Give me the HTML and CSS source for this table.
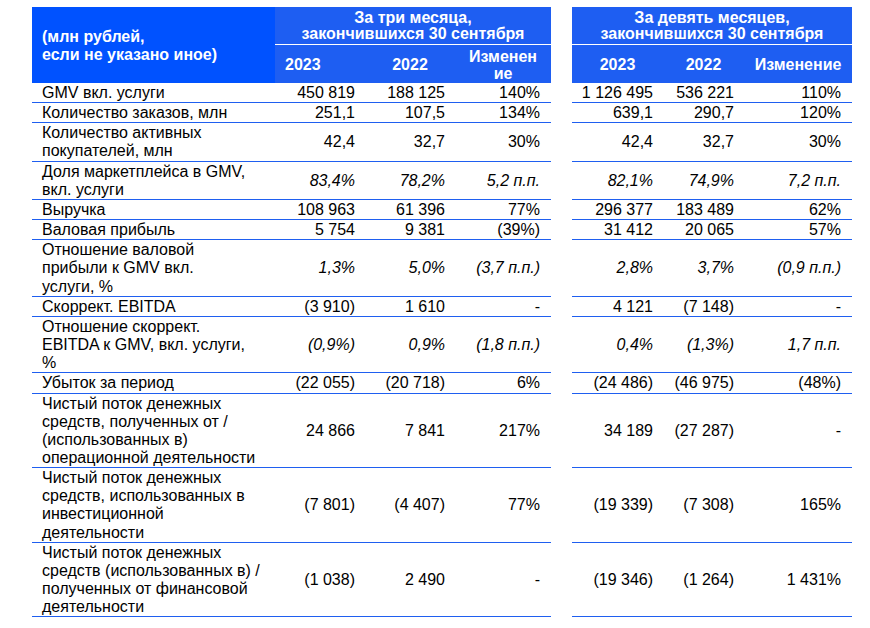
FILE: index.html
```html
<!DOCTYPE html>
<html lang="ru">
<head>
<meta charset="utf-8">
<title>Финансовые показатели</title>
<link rel="stylesheet" href="styles.css">
</head>
<body>
<div class="wrap">
<table class="fin">
  <colgroup>
    <col class="c-label">
    <col class="c-a1"><col class="c-a2"><col class="c-a3">
    <col class="c-gap">
    <col class="c-b1"><col class="c-b2"><col class="c-b3">
  </colgroup>
  <thead>
    <tr class="hr1">
      <th class="corner" rowspan="2">(млн рублей,<br>если не указано иное)</th>
      <th class="group" colspan="3">За три месяца,<br>закончившихся 30 сентября</th>
      <th class="gap" rowspan="2"></th>
      <th class="group" colspan="3">За девять месяцев,<br>закончившихся 30 сентября</th>
    </tr>
    <tr class="hr2">
      <th class="yr first">2023</th>
      <th class="yr">2022</th>
      <th class="yr">Изменен<br>ие</th>
      <th class="yr">2023</th>
      <th class="yr">2022</th>
      <th class="yr">Изменение</th>
    </tr>
  </thead>
  <tbody>
    <tr>
      <td class="lbl">GMV вкл. услуги</td>
      <td class="n">450 819</td><td class="n">188 125</td><td class="n n3">140%</td>
      <td class="gap"></td>
      <td class="n">1 126 495</td><td class="n">536 221</td><td class="n n3">110%</td>
    </tr>
    <tr>
      <td class="lbl">Количество заказов, млн</td>
      <td class="n">251,1</td><td class="n">107,5</td><td class="n n3">134%</td>
      <td class="gap"></td>
      <td class="n">639,1</td><td class="n">290,7</td><td class="n n3">120%</td>
    </tr>
    <tr>
      <td class="lbl">Количество активных<br>покупателей, млн</td>
      <td class="n">42,4</td><td class="n">32,7</td><td class="n n3">30%</td>
      <td class="gap"></td>
      <td class="n">42,4</td><td class="n">32,7</td><td class="n n3">30%</td>
    </tr>
    <tr class="it">
      <td class="lbl">Доля маркетплейса в GMV,<br>вкл. услуги</td>
      <td class="n">83,4%</td><td class="n">78,2%</td><td class="n n3">5,2 п.п.</td>
      <td class="gap"></td>
      <td class="n">82,1%</td><td class="n">74,9%</td><td class="n n3">7,2 п.п.</td>
    </tr>
    <tr>
      <td class="lbl">Выручка</td>
      <td class="n">108 963</td><td class="n">61 396</td><td class="n n3">77%</td>
      <td class="gap"></td>
      <td class="n">296 377</td><td class="n">183 489</td><td class="n n3">62%</td>
    </tr>
    <tr>
      <td class="lbl">Валовая прибыль</td>
      <td class="n">5 754</td><td class="n">9 381</td><td class="n n3">(39%)</td>
      <td class="gap"></td>
      <td class="n">31 412</td><td class="n">20 065</td><td class="n n3">57%</td>
    </tr>
    <tr class="it">
      <td class="lbl">Отношение валовой<br>прибыли к GMV вкл.<br>услуги, %</td>
      <td class="n">1,3%</td><td class="n">5,0%</td><td class="n n3">(3,7 п.п.)</td>
      <td class="gap"></td>
      <td class="n">2,8%</td><td class="n">3,7%</td><td class="n n3">(0,9 п.п.)</td>
    </tr>
    <tr>
      <td class="lbl">Скоррект. EBITDA</td>
      <td class="n">(3 910)</td><td class="n">1 610</td><td class="n n3">-</td>
      <td class="gap"></td>
      <td class="n">4 121</td><td class="n">(7 148)</td><td class="n n3">-</td>
    </tr>
    <tr class="it">
      <td class="lbl">Отношение скоррект.<br>EBITDA к GMV, вкл. услуги,<br>%</td>
      <td class="n">(0,9%)</td><td class="n">0,9%</td><td class="n n3">(1,8 п.п.)</td>
      <td class="gap"></td>
      <td class="n">0,4%</td><td class="n">(1,3%)</td><td class="n n3">1,7 п.п.</td>
    </tr>
    <tr>
      <td class="lbl">Убыток за период</td>
      <td class="n">(22 055)</td><td class="n">(20 718)</td><td class="n n3">6%</td>
      <td class="gap"></td>
      <td class="n">(24 486)</td><td class="n">(46 975)</td><td class="n n3">(48%)</td>
    </tr>
    <tr>
      <td class="lbl">Чистый поток денежных<br>средств, полученных от /<br>(использованных в)<br>операционной деятельности</td>
      <td class="n">24 866</td><td class="n">7 841</td><td class="n n3">217%</td>
      <td class="gap"></td>
      <td class="n">34 189</td><td class="n">(27 287)</td><td class="n n3">-</td>
    </tr>
    <tr>
      <td class="lbl">Чистый поток денежных<br>средств, использованных в<br>инвестиционной<br>деятельности</td>
      <td class="n">(7 801)</td><td class="n">(4 407)</td><td class="n n3">77%</td>
      <td class="gap"></td>
      <td class="n">(19 339)</td><td class="n">(7 308)</td><td class="n n3">165%</td>
    </tr>
    <tr>
      <td class="lbl">Чистый поток денежных<br>средств (использованных в) /<br>полученных от финансовой<br>деятельности</td>
      <td class="n">(1 038)</td><td class="n">2 490</td><td class="n n3">-</td>
      <td class="gap"></td>
      <td class="n">(19 346)</td><td class="n">(1 264)</td><td class="n n3">1 431%</td>
    </tr>
  </tbody>
</table>
</div>
</body>
</html>
```

FILE: styles.css
```css
html, body {
  margin: 0;
  padding: 0;
  background: #ffffff;
}

.wrap {
  padding: 7px 0 0 32px;
}

.fin {
  table-layout: fixed;
  width: 820px;
  border-collapse: collapse;
  border-spacing: 0;
  font-family: "Liberation Sans", Arial, sans-serif;
  font-size: 16px;
  color: #000000;
}

.c-label { width: 243px; }
.c-a1 { width: 90px; }
.c-a2 { width: 90px; }
.c-a3 { width: 96px; }
.c-gap { width: 21px; }
.c-b1 { width: 91px; }
.c-b2 { width: 81px; }
.c-b3 { width: 108px; }

th {
  font-weight: bold;
  color: #ffffff;
  padding: 0;
}

.corner {
  background: #0052ff;
  text-align: left;
  vertical-align: middle;
  line-height: 18px;
  padding: 2px 0 0 10px;
}

.group {
  background: #1e5ef2;
  text-align: center;
  vertical-align: bottom;
  line-height: 16px;
  height: 36px;
  padding: 0 0 2px 0;
  border-bottom: 1px solid #ffffff;
  box-sizing: border-box;
}

.hr1 { height: 37px; }
.hr2 { height: 39px; }

.yr {
  background: #1e5ef2;
  text-align: center;
  vertical-align: middle;
  line-height: 17px;
  padding: 2px 0 0 0;
}

.yr.first {
  text-align: left;
  padding-left: 10px;
}

.gap {
  background: #ffffff;
  border: none;
}

td {
  padding: 1px 0 0 0;
  line-height: 18.15px;
  border-bottom: 1px solid #1f5ff0;
  vertical-align: middle;
}

td.gap {
  border-bottom: none;
}

.lbl {
  text-align: left;
  vertical-align: top;
  padding-left: 10px;
  white-space: nowrap;
}

.n {
  text-align: right;
  padding-right: 10px;
  white-space: nowrap;
}

.n3 {
  padding-right: 11px;
}

.it .n {
  font-style: italic;
}
```
